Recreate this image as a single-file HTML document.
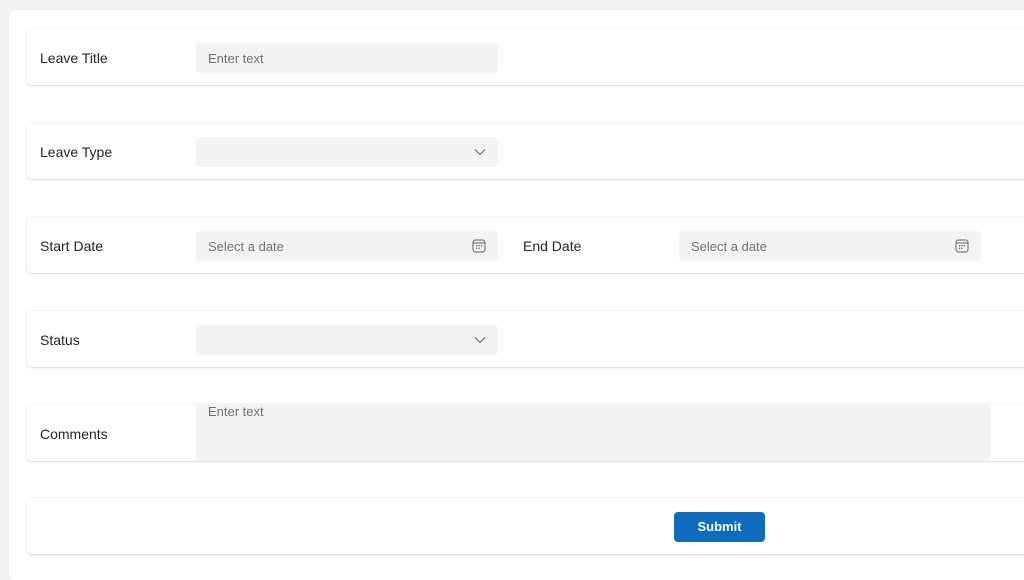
<!DOCTYPE html>
<html><head><style>
body{margin:0;width:1024px;height:568px;background:#f3f3f3;overflow:hidden;font-family:"Liberation Sans",sans-serif;position:relative}
.panel{position:absolute;left:9px;top:10px;width:1030px;height:570px;background:#fff;border-radius:6px;box-shadow:0 0 2px rgba(0,0,0,.12)}
.card{position:absolute;left:27px;width:1010px;height:56px;background:#fff;border-radius:4px;box-shadow:0 0 1.5px rgba(0,0,0,.14),0 1px 2px rgba(0,0,0,.12)}
.lbl{position:absolute;left:13px;top:21px;font-size:14px;color:#242424}
.inp{position:absolute;left:169px;top:14px;width:302px;height:30px;background:#f3f3f3;border-radius:4px;font-size:13px;color:#707070;box-sizing:border-box;padding:8px 12px}
.ico{position:absolute;right:12px;top:8px}
</style></head><body>
<div class="panel"></div>
<div class="card" style="top:29px"><div class="lbl">Leave Title</div><div class="inp">Enter text</div></div>
<div class="card" style="top:123px"><div class="lbl">Leave Type</div><div class="inp"><svg class="ico" style="top:11px" width="12" height="8" viewBox="0 0 12 8"><path d="M1 1.5l5 5 5-5" fill="none" stroke="#616161" stroke-width="1"/></svg></div></div>
<div class="card" style="top:217px"><div class="lbl">Start Date</div><div class="inp">Select a date<svg class="ico" width="14" height="14" viewBox="0 0 14 14"><rect x="1" y="1" width="12" height="12" rx="2.5" fill="none" stroke="#616161"/><path d="M1.5 4h11" stroke="#616161"/><g fill="#616161"><rect x="4" y="6" width="1.3" height="1.3"/><rect x="6.4" y="6" width="1.3" height="1.3"/><rect x="8.8" y="6" width="1.3" height="1.3"/><rect x="4" y="8.6" width="1.3" height="1.3"/><rect x="6.4" y="8.6" width="1.3" height="1.3"/></g></svg></div>
<div class="lbl" style="left:496px">End Date</div><div class="inp" style="left:652px">Select a date<svg class="ico" width="14" height="14" viewBox="0 0 14 14"><rect x="1" y="1" width="12" height="12" rx="2.5" fill="none" stroke="#616161"/><path d="M1.5 4h11" stroke="#616161"/><g fill="#616161"><rect x="4" y="6" width="1.3" height="1.3"/><rect x="6.4" y="6" width="1.3" height="1.3"/><rect x="8.8" y="6" width="1.3" height="1.3"/><rect x="4" y="8.6" width="1.3" height="1.3"/><rect x="6.4" y="8.6" width="1.3" height="1.3"/></g></svg></div></div>
<div class="card" style="top:311px"><div class="lbl">Status</div><div class="inp"><svg class="ico" style="top:11px" width="12" height="8" viewBox="0 0 12 8"><path d="M1 1.5l5 5 5-5" fill="none" stroke="#616161" stroke-width="1"/></svg></div></div>
<div class="card" style="top:404px;height:57px"><div class="lbl" style="top:22px">Comments</div><div class="inp" style="top:0;width:794px;height:57px;padding:0 12px;border-radius:0">Enter text</div></div>
<div class="card" style="top:498px"><div style="position:absolute;left:647px;top:14px;width:91px;height:30px;background:#0f6cbd;border-radius:4px;color:#fff;font-weight:bold;font-size:13px;text-align:center;line-height:30px">Submit</div></div>
</body></html>
